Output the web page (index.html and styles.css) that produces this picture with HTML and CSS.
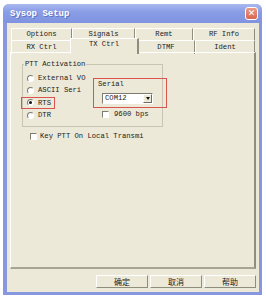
FILE: index.html
```html
<!DOCTYPE html>
<html>

<head>
  <title>Sysop Setup</title>
  <link rel="stylesheet" href="styles.css">
</head>

<body>
  <div class="window">
    <div class="titlebar">
      <span class="title">Sysop Setup</span>
      <span class="close">&#x2715;</span>
    </div>
    <div class="client">
      <div class="tab-row row-back">
        <div class="tab">Options</div>
        <div class="tab">Signals</div>
        <div class="tab">Remt</div>
        <div class="tab">RF Info</div>
      </div>
      <div class="tab-row row-front">
        <div class="tab">RX Ctrl</div>
        <div class="tab selected">TX Ctrl</div>
        <div class="tab">DTMF</div>
        <div class="tab">Ident</div>
      </div>
      <div class="panel">
        <fieldset class="group">
          <legend>PTT Activation</legend>
          <div class="group-body">
            <div class="radios">
              <div class="radio-row"><span class="radio"></span>External VO</div>
              <div class="radio-row"><span class="radio"></span>ASCII Seri</div>
              <div class="radio-row marked"><span class="radio checked"></span>RTS</div>
              <div class="radio-row"><span class="radio"></span>DTR</div>
            </div>
            <div class="serial-col">
              <div class="serial-box">
                <div class="serial-label">Serial</div>
                <div class="combo">
                  <span class="combo-text">COM12</span>
                  <span class="combo-btn"><span class="arrow"></span></span>
                </div>
              </div>
              <div class="check-row baud"><span class="check"></span>9600 bps</div>
            </div>
          </div>
        </fieldset>
        <div class="check-row key-ptt"><span class="check"></span>Key PTT On Local Transmi</div>
      </div>
      <div class="buttons">
        <button type="button">确定</button>
        <button type="button">取消</button>
        <button type="button">帮助</button>
      </div>
    </div>
  </div>
</body>

</html>
```

FILE: styles.css
```css
body {
  margin: 0;
  background-color: #fff;
  font-family: "Liberation Mono", monospace;
  font-size: 7.2px;
  color: #222;
}

.window {
  width: 259px;
  height: 291px;
  margin: 4px 0 0 3px;
  background-color: #8797e0;
  border-radius: 6px 6px 0 0;
  display: flex;
  flex-direction: column;
}

.titlebar {
  height: 19px;
  display: flex;
  align-items: center;
  justify-content: space-between;
  padding: 0 4px 0 7px;
  border-radius: 6px 6px 0 0;
  background: linear-gradient(#a9b8f0, #8a9ee6 40%, #7f93e0);
}

.title {
  color: #fff;
  font-weight: bold;
  font-size: 9px;
  text-shadow: 1px 1px 0 #6272c4;
}

.close {
  width: 13px;
  height: 13px;
  border: 1px solid #fff;
  border-radius: 3px;
  box-sizing: border-box;
  background: linear-gradient(#ea9a86, #d8664f);
  color: #fff;
  font-family: "DejaVu Sans", sans-serif;
  font-weight: bold;
  font-size: 9px;
  line-height: 11px;
  text-align: center;
}

.client {
  flex: 1;
  margin: 0 3px 3px 4px;
  padding: 5px 3px 0 3px;
  background-color: #ece9d8;
  display: flex;
  flex-direction: column;
}

.tab-row {
  display: grid;
  height: 12px;
  margin-left: 1px;
  width: 244px;
}

.row-back {
  grid-template-columns: 61px 63px 58px 62px;
}

.row-front {
  grid-template-columns: 61px 65px 58px 60px;
}

.tab {
  border-top: 1px solid #fff;
  border-left: 1px solid #fff;
  border-right: 1px solid #8f8d7e;
  text-align: center;
  line-height: 11px;
}

.row-front .tab {
  line-height: 13px;
}

.tab.selected {
  position: relative;
  z-index: 1;
  margin: -2px -2px 0 -2px;
  line-height: 11px;
  background-color: #ece9d8;
  border-right: 2px solid #8f8d7e;
}

.panel {
  height: 217px;
  box-sizing: border-box;
  border-top: 1px solid #fff;
  border-left: 1px solid #fff;
  border-right: 2px solid #8f8d7e;
  border-bottom: 2px solid #a6a494;
  padding-top: 7px;
}

.group {
  width: 136px;
  height: 67px;
  box-sizing: border-box;
  margin: 0 0 0 11px;
  padding: 0 0 0 4px;
  border: 1px solid #c8c5b4;
}

.group legend {
  margin-left: -3px;
  padding: 0 1px;
  line-height: 9px;
}

.group-body {
  display: grid;
  grid-template-columns: 66px 69px;
  margin-top: 3px;
}

.radios {
  display: flex;
  flex-direction: column;
}

.radio-row {
  height: 12.3px;
  display: flex;
  align-items: center;
  gap: 4px;
  box-sizing: border-box;
}

.radio-row.marked {
  width: 34px;
  margin-left: -6px;
  padding-left: 5px;
  border: 1px solid #d9534f;
}

.radio {
  width: 7px;
  height: 7px;
  box-sizing: border-box;
  border-radius: 50%;
  border: 1px solid;
  border-color: #7d7b70 #fff #fff #7d7b70;
  background-color: #fff;
  display: flex;
  align-items: center;
  justify-content: center;
}

.radio.checked::after {
  content: "";
  width: 3px;
  height: 3px;
  border-radius: 50%;
  background-color: #111;
}

.serial-col {
  margin-right: -5px;
}

.serial-box {
  margin-top: 6px;
  height: 30px;
  box-sizing: border-box;
  border: 1px solid #d9534f;
  padding: 1px 0 0 4px;
}

.serial-label {
  line-height: 9px;
}

.combo {
  width: 51px;
  height: 11px;
  box-sizing: border-box;
  margin: 4px 0 0 4px;
  border: 1px solid;
  border-color: #7d7b70 #fff #fff #7d7b70;
  background-color: #fff;
  display: flex;
  align-items: center;
  justify-content: space-between;
}

.combo-text {
  padding-left: 2px;
  line-height: 9px;
}

.combo-btn {
  width: 9px;
  height: 9px;
  box-sizing: border-box;
  border: 1px solid;
  border-color: #fff #6f6d63 #6f6d63 #fff;
  background-color: #ece9d8;
  display: flex;
  align-items: center;
  justify-content: center;
}

.arrow {
  border-left: 2.5px solid transparent;
  border-right: 2.5px solid transparent;
  border-top: 3px solid #111;
}

.check-row {
  display: flex;
  align-items: center;
  gap: 5px;
  height: 10px;
}

.check {
  width: 7px;
  height: 7px;
  box-sizing: border-box;
  border: 1px solid;
  border-color: #7d7b70 #fff #fff #7d7b70;
  background-color: #fff;
}

.baud {
  margin: 1px 0 0 9px;
}

.key-ptt {
  margin: 4px 0 0 19px;
  gap: 3px;
}

.buttons {
  display: flex;
  justify-content: flex-end;
  gap: 2px;
  margin-top: 6px;
}

button {
  width: 52px;
  height: 13px;
  padding: 0;
  border: 1px solid;
  border-color: #fff #8f8d7e #8f8d7e #fff;
  background-color: #ece9d8;
  font-family: "Noto Sans CJK SC", sans-serif;
  font-size: 8px;
  line-height: 11px;
  color: #222;
}
```
